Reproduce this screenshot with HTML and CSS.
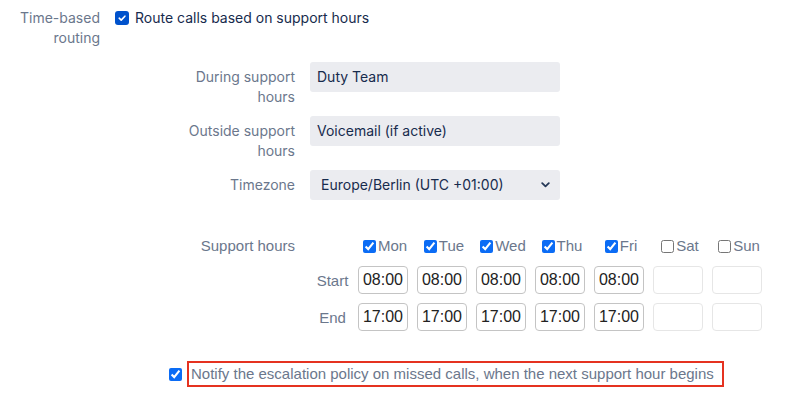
FILE: index.html
```html
<!DOCTYPE html>
<html lang="en">
<head>
<meta charset="utf-8">
<title>Time-based routing</title>
<link rel="stylesheet" href="styles.css">
</head>
<body>
<div class="page">
  <div class="top-row">
    <div class="top-label">Time-based routing</div>
    <div class="top-body">
      <label class="route-check">
        <span class="fake-check"><svg width="14" height="14" viewBox="0 0 14 14"><path d="M4.2 7.2 L6.2 9.1 L9.9 5.2" fill="none" stroke="#fff" stroke-width="1.6" stroke-linecap="round" stroke-linejoin="round"/></svg></span>
        <span>Route calls based on support hours</span>
      </label>

      <div class="field-rows">
        <div class="field-row">
          <div class="field-label">During support hours</div>
          <div class="field-input">Duty Team</div>
        </div>
        <div class="field-row">
          <div class="field-label">Outside support hours</div>
          <div class="field-input">Voicemail (if active)</div>
        </div>
        <div class="field-row single">
          <div class="field-label">Timezone</div>
          <div class="field-select">
            <span>Europe/Berlin (UTC +01:00)</span>
            <svg width="9" height="6" viewBox="0 0 9 6"><path d="M1.2 1.2 L4.5 4.4 L7.8 1.2" fill="none" stroke="#253858" stroke-width="1.8" stroke-linecap="round" stroke-linejoin="round"/></svg>
          </div>
        </div>
      </div>

      <div class="support">
        <div class="support-label">Support hours</div>
        <div class="hours-grid">
          <div class="cell"></div>
          <label class="day"><input type="checkbox" checked>Mon</label>
          <label class="day"><input type="checkbox" checked>Tue</label>
          <label class="day"><input type="checkbox" checked>Wed</label>
          <label class="day"><input type="checkbox" checked>Thu</label>
          <label class="day"><input type="checkbox" checked>Fri</label>
          <label class="day"><input type="checkbox">Sat</label>
          <label class="day"><input type="checkbox">Sun</label>

          <div class="row-label">Start</div>
          <input class="time" type="text" value="08:00">
          <input class="time" type="text" value="08:00">
          <input class="time" type="text" value="08:00">
          <input class="time" type="text" value="08:00">
          <input class="time" type="text" value="08:00">
          <input class="time off" type="text" value="" disabled>
          <input class="time off" type="text" value="" disabled>

          <div class="row-label">End</div>
          <input class="time" type="text" value="17:00">
          <input class="time" type="text" value="17:00">
          <input class="time" type="text" value="17:00">
          <input class="time" type="text" value="17:00">
          <input class="time" type="text" value="17:00">
          <input class="time off" type="text" value="" disabled>
          <input class="time off" type="text" value="" disabled>
        </div>
      </div>
    </div>
  </div>

  <div class="notify-row">
    <input type="checkbox" checked class="notify-check">
    <span class="notify-text">Notify the escalation policy on missed calls, when the next support hour begins</span>
  </div>
</div>
</body>
</html>
```

FILE: styles.css
```css
* { box-sizing: border-box; }

html, body {
  margin: 0;
  background: #ffffff;
}

body {
  font-family: Inter, "Noto Sans", sans-serif;
  font-size: 14px;
  color: #172b4d;
}

.page {
  padding-top: 8px;
  width: 795px;
  height: 402px;
  overflow: hidden;
}

.top-row {
  display: grid;
  grid-template-columns: 100px 1fr;
  column-gap: 15px;
}

.top-label {
  text-align: right;
  line-height: 20px;
  color: #6b778c;
}

.route-check {
  display: flex;
  align-items: center;
  gap: 6px;
  line-height: 20px;
  height: 20px;
}

.fake-check {
  width: 14px;
  height: 14px;
  border-radius: 3px;
  background: #0052cc;
  display: flex;
}

.field-rows {
  margin-top: 34px;
  display: flex;
  flex-direction: column;
  gap: 9px;
}

.field-row {
  display: grid;
  grid-template-columns: 180px 250px;
  column-gap: 15px;
}

.field-label {
  justify-self: end;
  width: 112px;
  text-align: right;
  color: #6b778c;
  line-height: 20px;
  padding-top: 5px;
}

.field-input,
.field-select {
  height: 30px;
  background: #ebecf0;
  border-radius: 3px;
  line-height: 30px;
  padding: 0 7px;
  color: #172b4d;
}

.field-select {
  display: flex;
  align-items: center;
  justify-content: space-between;
  padding: 0 10px 0 11px;
}

.support {
  margin-top: 35px;
  display: flex;
  gap: 15px;
  align-items: flex-start;
}

.support-label {
  width: 180px;
  text-align: right;
  font-family: "Liberation Sans", Arial, sans-serif;
  font-size: 15px;
  color: #6b778c;
  line-height: 22px;
}

.hours-grid {
  display: grid;
  grid-template-columns: 39px repeat(7, 50px);
  grid-template-rows: 22px 28px 28px;
  column-gap: 9px;
  row-gap: 9px;
  align-items: center;
  font-family: "Liberation Sans", Arial, sans-serif;
  font-size: 15px;
  color: #6b778c;
}

.day {
  display: flex;
  align-items: center;
  justify-content: center;
  white-space: nowrap;
  line-height: 22px;
}

.day input {
  width: 13px;
  height: 13px;
  margin: 0 2px 0 4px;
  accent-color: #0b6cf5;
}

.row-label {
  text-align: center;
  padding-left: 6px;
}

.time {
  width: 50px;
  height: 28px;
  border: 1px solid #c4c4c4;
  border-radius: 4px;
  background: #ffffff;
  font-family: "Liberation Sans", Arial, sans-serif;
  font-size: 16px;
  color: #222222;
  text-align: center;
  padding: 0;
  margin: 0;
}

.time.off {
  border-color: #e6e6e6;
}

.notify-row {
  margin-top: 30px;
  display: flex;
  align-items: center;
  padding-left: 165px;
}

.notify-check {
  width: 13px;
  height: 13px;
  margin: 0 5px 0 4px;
  accent-color: #0b6cf5;
}

.notify-text {
  display: block;
  width: 537px;
  height: 26px;
  border: 2px solid #e53220;
  padding: 0 4px 0 2px;
  line-height: 22px;
  font-family: "Liberation Sans", Arial, sans-serif;
  font-size: 15px;
  color: #6b778c;
  white-space: nowrap;
}
```
